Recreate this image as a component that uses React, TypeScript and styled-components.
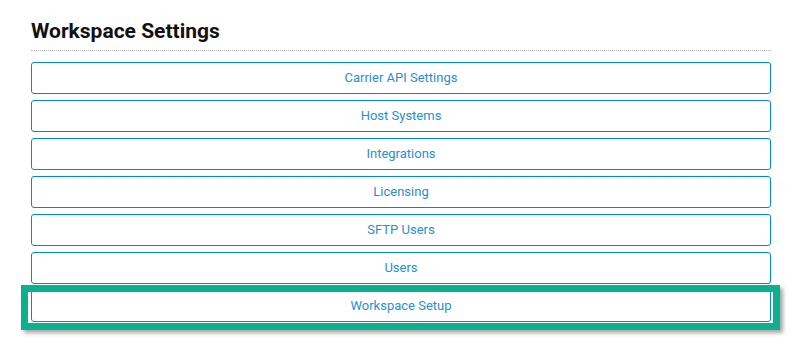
import React from "react";
import styled, { createGlobalStyle } from "styled-components";

const items = [
  "Carrier API Settings",
  "Host Systems",
  "Integrations",
  "Licensing",
  "SFTP Users",
  "Users",
  "Workspace Setup",
];

const App = () => {
  return (
    <>
      <GlobalStyle />
      <Page>
        <Title>Workspace Settings</Title>
        <List>
          {items.map((label) => (
            <Item key={label}>
              <LinkButton>{label}</LinkButton>
              {label === "Workspace Setup" && <Highlight />}
            </Item>
          ))}
        </List>
      </Page>
    </>
  );
};

export default App;

const GlobalStyle = createGlobalStyle`
  html, body {
    margin: 0;
    background: #ffffff;
    font-family: Roboto, "Liberation Sans", sans-serif;
  }
`;

const Page = styled.div`
  box-sizing: border-box;
  width: 771px;
  min-height: 355px;
  padding: 16px 0 0 31px;
`;

const Title = styled.h1`
  margin: 0;
  height: 34px;
  font-size: 21px;
  font-weight: 700;
  line-height: 30px;
  color: #111;
  border-bottom: 1px dotted #b5b5b5;
`;

const List = styled.div`
  display: flex;
  flex-direction: column;
  gap: 6px;
  margin-top: 11px;
`;

const Item = styled.div`
  position: relative;
`;

const LinkButton = styled.button`
  display: block;
  width: 100%;
  height: 32px;
  padding: 0 0 2px;
  background: #fff;
  border: 1px solid #0288d1;
  border-radius: 3px;
  font-family: Roboto, "Liberation Sans", sans-serif;
  font-size: 13px;
  color: #2a8ed3;
  cursor: pointer;
`;

const Highlight = styled.div`
  position: absolute;
  left: -10px;
  top: -5px;
  width: 745px;
  height: 31px;
  border: 7px solid #0db08e;
  box-shadow: 3px 3px 4px rgba(0, 0, 0, 0.35);
  pointer-events: none;
`;
